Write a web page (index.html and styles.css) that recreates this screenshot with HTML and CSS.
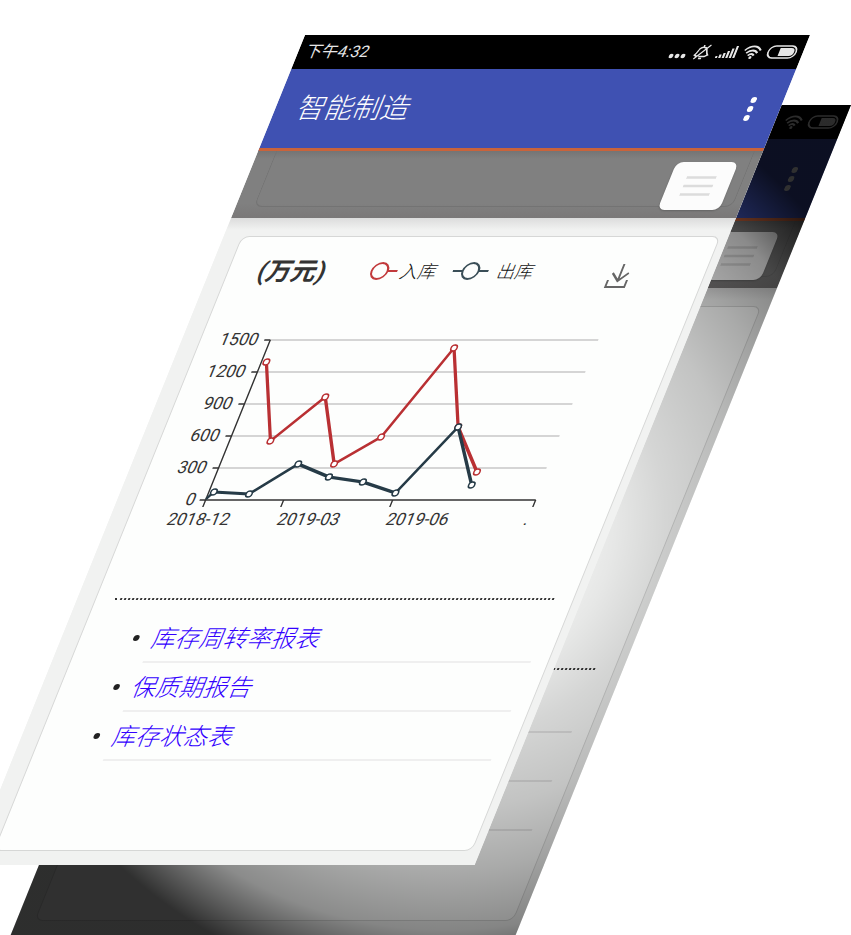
FILE: index.html
```html
<!DOCTYPE html>
<html lang="zh-CN">
<head>
    <meta charset="UTF-8">
    <meta name="viewport" content="width=device-width, initial-scale=1.0">
    <title>智能制造</title>
    <link rel="stylesheet" href="styles.css">
</head>
<body>
    <!-- Shared icons -->
    <svg class="icon-defs" aria-hidden="true">
        <symbol id="icon-dots" viewBox="0 0 17 14">
            <circle cx="2.5" cy="11" r="2.2"/>
            <circle cx="8.5" cy="11" r="2.2"/>
            <circle cx="14.5" cy="11" r="2.2"/>
        </symbol>
        <symbol id="icon-mute" viewBox="0 0 18 16">
            <path d="M5 12.500L2.500 11C4.500 9 4.500 7 5.500 5C7 2.500 11 2.500 12.500 5C13.500 7 13.500 9 15.500 11L13 12.500H7M7.500 14.500h3M9 1v2M15.500 1L3 15" fill="none" stroke="currentColor" stroke-width="1.500"/>
        </symbol>
        <symbol id="icon-signal" viewBox="0 0 20 14">
            <path d="M1 13v-2M4.500 13v-3.500M8 13V8M11.500 13V6M15 13V3.500M18.500 13V1" fill="none" stroke="currentColor" stroke-width="2.200"/>
        </symbol>
        <symbol id="icon-wifi" viewBox="0 0 18 14">
            <path d="M1 5.500C5.500 0 12.500 0 17 5.500M3.500 8.200C6.500 4.500 11.500 4.500 14.500 8.200M6 10.700C8 8.500 10 8.500 12 10.700" fill="none" stroke="currentColor" stroke-width="1.900"/>
            <circle cx="9" cy="12.500" r="1.500"/>
        </symbol>
        <symbol id="icon-battery" viewBox="0 0 30 14">
            <rect x="1" y="1" width="28" height="12" rx="6" fill="none" stroke="currentColor" stroke-width="1.700"/>
            <path d="M12 3h11q4 0 4 4t-4 4H12z"/>
        </symbol>
        <symbol id="icon-more" viewBox="0 0 6 24">
            <circle cx="3" cy="3" r="3"/>
            <circle cx="3" cy="12" r="3"/>
            <circle cx="3" cy="21" r="3"/>
        </symbol>
        <symbol id="icon-bars" viewBox="0 0 30 20">
            <path d="M0 1.500h30M0 10h30M0 18.500h30" stroke="currentColor" stroke-width="2.500"/>
        </symbol>
    </svg>

    <main class="scene">
        <!-- Shaded copy behind the screen -->
        <div class="phone phone-back" aria-hidden="true">
            <div class="status-bar">
                <div class="status-icons">
                    <svg class="icon-wifi"><use href="#icon-wifi"/></svg>
                    <svg class="icon-battery"><use href="#icon-battery"/></svg>
                </div>
            </div>
            <div class="app-bar">
                <svg class="icon-more"><use href="#icon-more"/></svg>
            </div>
            <div class="toolbar">
                <div class="toolbar-box">
                    <div class="menu-button"><svg class="icon-bars"><use href="#icon-bars"/></svg></div>
                </div>
            </div>
            <div class="content">
                <div class="card">
                    <div class="card-header"></div>
                    <div class="chart"></div>
                    <div class="divider"></div>
                    <div class="report-list">
                        <div class="report-row"></div>
                        <div class="report-row"></div>
                        <div class="report-row"></div>
                    </div>
                </div>
            </div>
        </div>

        <div class="phone phone-front">
            <div class="status-bar">
                <span class="clock">下午4:32</span>
                <div class="status-icons">
                    <svg class="icon-dots"><use href="#icon-dots"/></svg>
                    <svg class="icon-mute"><use href="#icon-mute"/></svg>
                    <svg class="icon-signal"><use href="#icon-signal"/></svg>
                    <svg class="icon-wifi"><use href="#icon-wifi"/></svg>
                    <svg class="icon-battery"><use href="#icon-battery"/></svg>
                </div>
            </div>
            <header class="app-bar">
                <h1>智能制造</h1>
                <button class="more-button" type="button" aria-label="更多">
                    <svg class="icon-more"><use href="#icon-more"/></svg>
                </button>
            </header>
            <nav class="toolbar">
                <div class="toolbar-box">
                    <button class="menu-button" type="button" aria-label="菜单">
                        <svg class="icon-bars"><use href="#icon-bars"/></svg>
                    </button>
                </div>
            </nav>
            <div class="content">
                <section class="card">
                    <div class="card-header">
                        <h2>(万元)</h2>
                        <div class="legend">
                            <span class="legend-item">
                                <svg class="legend-in" viewBox="0 0 28 20">
                                    <path d="M18 9h10"/>
                                    <circle cx="10" cy="9" r="8"/>
                                </svg>
                                入库
                            </span>
                            <span class="legend-item">
                                <svg class="legend-out" viewBox="0 0 36 20">
                                    <path d="M0 9h10M26 9h10"/>
                                    <circle cx="18" cy="9" r="8"/>
                                </svg>
                                出库
                            </span>
                        </div>
                        <button class="download-button" type="button" aria-label="下载">
                            <svg viewBox="0 0 24 24">
                                <path d="M12 0v17M4 9l8 8l8-8M2 16v7h19v-7"/>
                            </svg>
                        </button>
                    </div>

                    <svg class="chart" viewBox="0 0 476 220" role="img" aria-label="入库 出库">
                        <path class="grid-line" d="M69 20H397M69 52H397M69 84H397M69 116H397M69 148H397"/>
                        <path class="axis" d="M69 20V180H399"/>
                        <path class="axis" d="M63 20h6M63 52h6M63 84h6M63 116h6M63 148h6M63 180h6M69 180v7M147 180v7M256 180v7M399 180v7"/>
                        <g class="labels labels-y">
                            <text x="57" y="25">1500</text>
                            <text x="57" y="57">1200</text>
                            <text x="57" y="89">900</text>
                            <text x="57" y="121">600</text>
                            <text x="57" y="153">300</text>
                            <text x="59" y="185">0</text>
                        </g>
                        <g class="labels labels-x">
                            <text x="70" y="205">2018-12</text>
                            <text x="180" y="205">2019-03</text>
                            <text x="289" y="205">2019-06</text>
                            <text x="398" y="205">.</text>
                        </g>
                        <g class="series series-in">
                            <polyline points="74,42 110,121 147,77 183,144 219,117 256,28 292,107 329,152"/>
                            <circle cx="74" cy="42" r="3"/>
                            <circle cx="110" cy="121" r="3"/>
                            <circle cx="147" cy="77" r="3"/>
                            <circle cx="183" cy="144" r="3"/>
                            <circle cx="219" cy="117" r="3"/>
                            <circle cx="256" cy="28" r="3"/>
                            <circle cx="292" cy="107" r="3"/>
                            <circle cx="329" cy="152" r="3"/>
                        </g>
                        <g class="series series-out">
                            <polyline points="69,179 74,172 110,174 147,144 183,157 219,162 256,173 292,107 329,165"/>
                            <circle cx="74" cy="172" r="3"/>
                            <circle cx="110" cy="174" r="3"/>
                            <circle cx="147" cy="144" r="3"/>
                            <circle cx="183" cy="157" r="3"/>
                            <circle cx="219" cy="162" r="3"/>
                            <circle cx="256" cy="173" r="3"/>
                            <circle cx="292" cy="107" r="3"/>
                            <circle cx="329" cy="165" r="3"/>
                        </g>
                    </svg>

                    <div class="divider"></div>
                    <ul class="report-list">
                        <li class="report-row"><a href="#turnover">库存周转率报表</a></li>
                        <li class="report-row"><a href="#shelf-life">保质期报告</a></li>
                        <li class="report-row"><a href="#stock">库存状态表</a></li>
                    </ul>
                </section>
            </div>
        </div>
    </main>
</body>
</html>
```
FILE: styles.css
```css
* {
    box-sizing: border-box;
    margin: 0;
    padding: 0;
}

body {
    background: #fff;
    font-family: Roboto, "Noto Sans CJK SC", sans-serif;
    color: #333;
}

button {
    border: none;
    background: none;
    cursor: pointer;
}

svg {
    display: block;
    fill: currentColor;
}

.icon-defs {
    position: absolute;
    width: 0;
    height: 0;
}

/* Both screens share one grid cell and lean to the right */
.scene {
    display: grid;
    padding: 35px 41px 70px 305px;
    overflow: hidden;
}

.phone {
    grid-area: 1 / 1;
    overflow: hidden;
    background: #f1f2f1;
    transform: skewX(-22deg);
    transform-origin: top left;
}

.phone-back {
    position: relative;
    transform: translate(41px, 70px) skewX(-22deg);
}

.phone-back::after {
    content: "";
    position: absolute;
    top: 0;
    bottom: 0;
    left: -336px;
    right: 0;
    transform: skewX(22deg);
    transform-origin: 336px 0;
    background: radial-gradient(circle at 435px 415px,
        rgba(0, 0, 0, 0.04) 120px,
        rgba(0, 0, 0, 0.09) 170px,
        rgba(0, 0, 0, 0.16) 220px,
        rgba(0, 0, 0, 0.23) 290px,
        rgba(0, 0, 0, 0.33) 350px,
        rgba(0, 0, 0, 0.45) 410px,
        rgba(0, 0, 0, 0.81) 475px);
}

.status-bar {
    display: flex;
    justify-content: space-between;
    align-items: center;
    height: 34px;
    padding: 0 6px 0 8px;
    background: #000;
    color: #e6e6e6;
}

.clock {
    font-size: 16px;
    line-height: 36px;
}

.status-icons {
    display: flex;
    align-items: center;
    gap: 6px;
    margin-left: auto;
}

.icon-dots {
    width: 17px;
    height: 14px;
}

.icon-mute {
    width: 18px;
    height: 16px;
}

.icon-signal {
    width: 20px;
    height: 14px;
}

.icon-wifi {
    width: 18px;
    height: 14px;
}

.icon-battery {
    width: 30px;
    height: 14px;
}

.app-bar {
    display: flex;
    justify-content: space-between;
    align-items: center;
    height: 82px;
    padding: 0 27px 0 23px;
    border-bottom: 3px solid #c9633b;
    background: #3f51b2;
    color: #fff;
}

.app-bar h1 {
    font-size: 28px;
    font-weight: 300;
    line-height: 36px;
}

.more-button {
    color: #fff;
}

.icon-more {
    width: 6px;
    height: 24px;
    margin-left: auto;
}

.toolbar {
    height: 67px;
    padding: 0 8px 11px 18px;
    background: linear-gradient(#747474, #808080 8px, #808080 52px, #7a7878);
}

.toolbar-box {
    display: flex;
    justify-content: flex-end;
    height: 56px;
    padding: 11px 11px 0 0;
    border: 1px solid #737373;
    border-top: none;
    border-radius: 0 0 8px 8px;
}

.menu-button {
    display: flex;
    justify-content: center;
    align-items: center;
    width: 62px;
    height: 48px;
    border-radius: 7px;
    background: #fcfcfc;
    box-shadow: 0 1px 2px rgba(0, 0, 0, 0.2);
    color: #dcdcdc;
}

.icon-bars {
    width: 30px;
    height: 20px;
}

.content {
    padding: 18px 8px 14px 18px;
    background: linear-gradient(#dcdcdc, #f1f2f1 12px);
}

.card {
    border: 1px solid #d6d7d6;
    border-radius: 8px;
    background: #fdfefd;
    padding-bottom: 89px;
}

.card-header {
    display: flex;
    align-items: center;
    height: 70px;
    margin-bottom: 13px;
    padding: 0 72px 0 30px;
}

.card-header h2 {
    font-size: 25px;
    line-height: 32px;
}

.legend {
    display: flex;
    gap: 15px;
    margin-left: 43px;
}

.legend-item {
    display: flex;
    align-items: center;
    gap: 4px;
    font-size: 18px;
    line-height: 24px;
    font-weight: 300;
    color: #111;
}

.legend-item + .legend-item {
    gap: 10px;
}

.legend-in,
.legend-out {
    height: 20px;
    fill: none;
    stroke-width: 2;
}

.legend-in {
    width: 28px;
    stroke: #c23a3c;
}

.legend-out {
    width: 36px;
    stroke: #3a4e57;
}

.download-button {
    margin-left: auto;
    padding-top: 8px;
}

.download-button svg {
    width: 24px;
    height: 24px;
    fill: none;
    stroke: #666;
    stroke-width: 2;
}

.chart {
    width: 100%;
    height: 220px;
}

.grid-line {
    fill: none;
    stroke: #c8c8c8;
    stroke-width: 1.5;
}

.axis {
    fill: none;
    stroke: #333;
    stroke-width: 1.5;
}

.labels {
    font-size: 17px;
    fill: #333;
}

.labels-y {
    text-anchor: end;
}

.labels-x {
    text-anchor: middle;
}

.series {
    fill: none;
    stroke-width: 3;
}

.series circle {
    fill: #fff;
    stroke-width: 1.5;
}

.series-in {
    stroke: #b93033;
}

.series-out {
    stroke: #263b47;
}

.divider {
    margin: 58px 19px 14px;
    border-top: 2px dotted #333;
}

.report-list {
    padding: 0 17px 0 72px;
    list-style: none;
}

.report-row {
    display: flex;
    align-items: center;
    height: 49px;
    border-bottom: 2px solid #efefef;
}

.phone-back .report-row {
    border-color: #e6e6e6;
}

li.report-row::before {
    content: "";
    width: 6px;
    height: 6px;
    margin: 0 14px 0 -19px;
    border-radius: 50%;
    background: #222;
}

.report-row a {
    padding-top: 2px;
    color: #3300ff;
    font-size: 24px;
    font-weight: 300;
    line-height: 36px;
    text-decoration: none;
}
```
